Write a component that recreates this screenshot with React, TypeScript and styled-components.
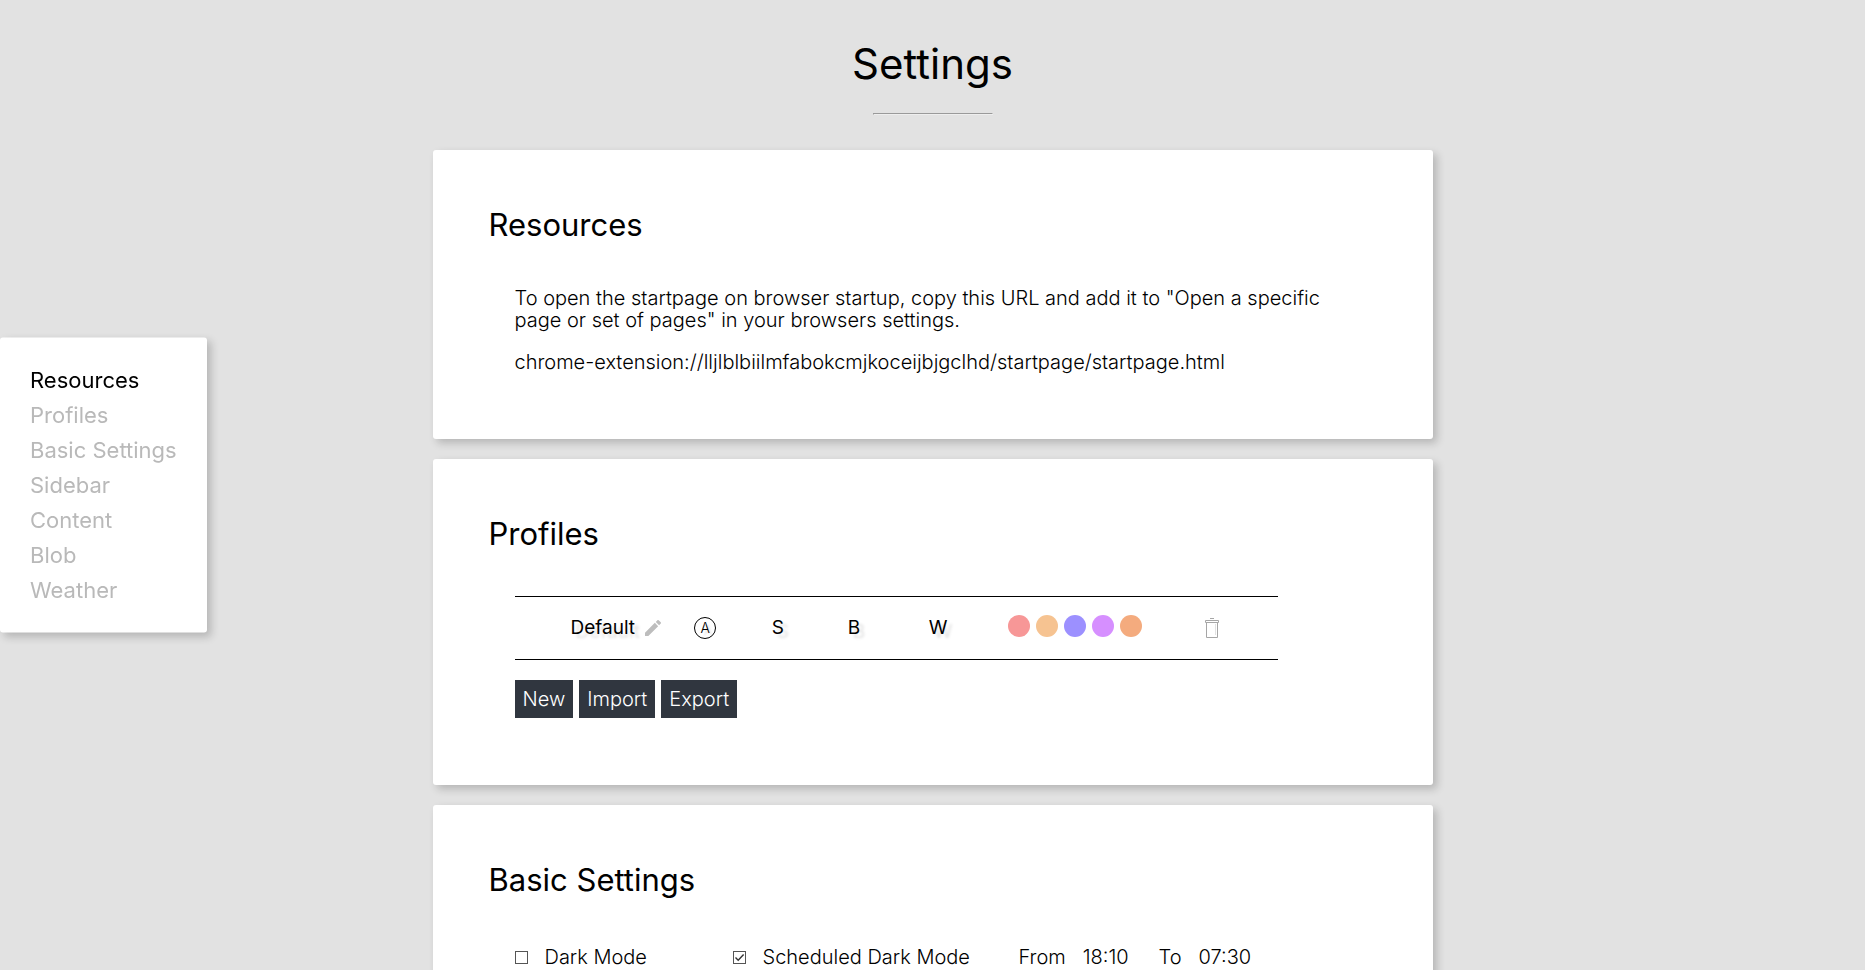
import React, { useState } from "react";
import styled, { createGlobalStyle } from "styled-components";

const GlobalStyle = createGlobalStyle`
  * { box-sizing: border-box; }
  body {
    margin: 0;
    background: #e2e2e2;
    color: #000;
    font-family: Inter, "Liberation Sans", sans-serif;
    font-size: 20px;
    font-weight: 300;
    line-height: 22px;
  }
  button, input { font: inherit; color: inherit; }
`;

const SideNav = styled.nav`
  position: fixed;
  left: 0;
  top: 50%;
  transform: translateY(-50%);
  padding: 25px 30px;
  background: #fff;
  border-radius: 3px;
  box-shadow: 4px 4px 8px rgba(0, 0, 0, 0.2);
`;

const NavLink = styled.a<{ $active: boolean }>`
  display: block;
  font-size: 22px;
  font-weight: 400;
  line-height: 35px;
  color: ${(p) => (p.$active ? "#000" : "#b9b9b9")};
  text-decoration: none;
`;

const Page = styled.main`
  max-width: 1000px;
  margin: 0 auto;
  padding-bottom: 20px;
`;

const Title = styled.h1`
  margin: 0;
  padding-top: 38px;
  font-size: 42px;
  font-weight: 400;
  line-height: 52px;
  text-align: center;
`;

const Rule = styled.hr`
  width: 120px;
  height: 2px;
  margin: 23px auto 35px;
  border: 1px inset #eee;
`;

const Card = styled.section`
  margin-bottom: 20px;
  padding: 55px 56px 62px;
  background: #fff;
  border-radius: 3px;
  box-shadow: 4px 4px 8px rgba(0, 0, 0, 0.2);
`;

const CardTitle = styled.h2`
  margin: 0 0 42px;
  font-size: 31px;
  font-weight: 400;
  line-height: 40px;
`;

const CardBody = styled.div`
  padding: 0 14px 0 26px;
`;

const Paragraph = styled.p`
  margin: 0 0 20px;
`;

const UrlText = styled.div`
  margin-bottom: 4px;
  overflow-wrap: anywhere;
`;

const ProfileTable = styled.table`
  width: 90%;
  margin-top: 7px;
  table-layout: fixed;
  border-collapse: collapse;
  border-top: 1px solid #000;
  border-bottom: 1px solid #000;
`;

const Column = styled.col<{ $share: number }>`
  width: ${(p) => p.$share}%;
`;

const Cell = styled.td`
  height: 63px;
  padding: 0;
  text-align: center;
  font-size: 19px;
  font-weight: 400;
  vertical-align: middle;
`;

const NameCell = styled(Cell)`
  padding-left: 50px;
`;

const TrashCell = styled(Cell)`
  padding-right: 25px;
`;

const CellContent = styled.div`
  display: flex;
  align-items: center;
  justify-content: center;
  gap: 10px;
`;

const Shaded = styled.span`
  text-shadow: 5px 4px 3px rgba(0, 0, 0, 0.12);
`;

const PlainButton = styled.button`
  display: inline-flex;
  padding: 0;
  border: 0;
  background: none;
  cursor: pointer;
`;

const AutoButton = styled(PlainButton)`
  align-items: center;
  justify-content: center;
  width: 22px;
  height: 22px;
  border: 1px solid #000;
  border-radius: 50%;
  font-size: 14px;
  font-weight: 300;
  line-height: 20px;
  text-shadow: 3px 3px 2px rgba(0, 0, 0, 0.1);
`;

const Swatches = styled.div`
  display: flex;
  justify-content: center;
  gap: 6px;
  padding-bottom: 5px;
`;

const Swatch = styled.span<{ $color: string }>`
  width: 22px;
  height: 22px;
  border-radius: 50%;
  background: ${(p) => p.$color};
`;

const Actions = styled.div`
  display: flex;
  gap: 6px;
  margin: 20px 0 5px;
`;

const ActionButton = styled.button`
  padding: 8px;
  border: 0;
  background: #30363f;
  color: #fff;
  line-height: 22px;
  cursor: pointer;
`;

const OptionRow = styled.div`
  display: flex;
  align-items: center;
  padding-top: 4px;
`;

const Option = styled.label<{ $width: number }>`
  display: flex;
  align-items: center;
  gap: 17px;
  width: ${(p) => p.$width}px;
  white-space: nowrap;
`;

const Checkbox = styled.input`
  appearance: none;
  flex: none;
  width: 13px;
  height: 13px;
  margin: 0;
  border: 1px solid #555;
  background: #fff;
  &:checked {
    background: #fff
      url("data:image/svg+xml,%3Csvg xmlns='http://www.w3.org/2000/svg' viewBox='0 0 11 11'%3E%3Cpath d='M1.5 5.5 4.2 8.2 9.6 2.5' fill='none' stroke='%23333' stroke-width='1.4'/%3E%3C/svg%3E");
  }
`;

const TimeInput = styled.input`
  width: 56px;
  padding: 0;
  border: 0;
  background: none;
  outline: 0;
`;

const PencilIcon = () => (
  <svg width="16" height="16" viewBox="3 3 18 18" fill="#bdbdbd">
    <path d="M3 17.25V21h3.75L17.81 9.94l-3.75-3.75L3 17.25zM20.71 7.04a1 1 0 0 0 0-1.41l-2.34-2.34a1 1 0 0 0-1.41 0l-1.83 1.83 3.75 3.75 1.83-1.83z" />
  </svg>
);

const TrashIcon = () => (
  <svg width="14" height="20" viewBox="0 0 14 20" fill="none" stroke="#a6a6a6">
    <path d="M5 .5H9M.5 2.5H13.5V4.5H.5ZM1.5 4.5V19.5H12.5V4.5" />
    <path d="M10.5 6V17" stroke="#e2e2e2" />
  </svg>
);

const sections = ["Resources", "Profiles", "Basic Settings", "Sidebar", "Content", "Blob", "Weather"];
const columns = [20, 10, 9, 11, 11, 25, 14];
const palette = ["#f79797", "#f6c391", "#9c90ff", "#d68fff", "#f4ab7e"];
const slug = (name: string) => name.toLowerCase().replace(" ", "-");

export default function App() {
  const [active, setActive] = useState("Resources");
  const [dark, setDark] = useState(false);
  const [scheduled, setScheduled] = useState(true);

  return (
    <>
      <GlobalStyle />
      <SideNav>
        {sections.map((name) => (
          <NavLink key={name} href={`#${slug(name)}`} $active={name === active} onClick={() => setActive(name)}>
            {name}
          </NavLink>
        ))}
      </SideNav>
      <Page>
        <Title>Settings</Title>
        <Rule />

        <Card id="resources">
          <CardTitle>Resources</CardTitle>
          <CardBody>
            <Paragraph>
              To open the startpage on browser startup, copy this URL and add it to "Open a specific page or set of
              pages" in your browsers settings.
            </Paragraph>
            <UrlText>chrome-extension://lljlblbiilmfabokcmjkoceijbjgclhd/startpage/startpage.html</UrlText>
          </CardBody>
        </Card>

        <Card id="profiles">
          <CardTitle>Profiles</CardTitle>
          <CardBody>
            <ProfileTable>
              <colgroup>
                {columns.map((share, i) => (
                  <Column key={i} $share={share} />
                ))}
              </colgroup>
              <tbody>
                <tr>
                  <NameCell>
                    <CellContent>
                      <Shaded>Default</Shaded>
                      <PlainButton aria-label="Rename profile">
                        <PencilIcon />
                      </PlainButton>
                    </CellContent>
                  </NameCell>
                  <Cell>
                    <CellContent>
                      <AutoButton>A</AutoButton>
                    </CellContent>
                  </Cell>
                  {["S", "B", "W"].map((letter) => (
                    <Cell key={letter}>
                      <Shaded>{letter}</Shaded>
                    </Cell>
                  ))}
                  <Cell>
                    <Swatches>
                      {palette.map((color) => (
                        <Swatch key={color} $color={color} />
                      ))}
                    </Swatches>
                  </Cell>
                  <TrashCell>
                    <CellContent>
                      <PlainButton aria-label="Delete profile">
                        <TrashIcon />
                      </PlainButton>
                    </CellContent>
                  </TrashCell>
                </tr>
              </tbody>
            </ProfileTable>
            <Actions>
              <ActionButton>New</ActionButton>
              <ActionButton>Import</ActionButton>
              <ActionButton>Export</ActionButton>
            </Actions>
          </CardBody>
        </Card>

        <Card id="basic-settings">
          <CardTitle>Basic Settings</CardTitle>
          <CardBody>
            <OptionRow>
              <Option $width={218}>
                <Checkbox type="checkbox" checked={dark} onChange={() => setDark(!dark)} />
                Dark Mode
              </Option>
              <Option $width={286}>
                <Checkbox type="checkbox" checked={scheduled} onChange={() => setScheduled(!scheduled)} />
                Scheduled Dark Mode
              </Option>
              <Option $width={140}>
                From
                <TimeInput type="text" defaultValue="18:10" />
              </Option>
              <Option $width={120}>
                To
                <TimeInput type="text" defaultValue="07:30" />
              </Option>
            </OptionRow>
          </CardBody>
        </Card>
      </Page>
    </>
  );
}
